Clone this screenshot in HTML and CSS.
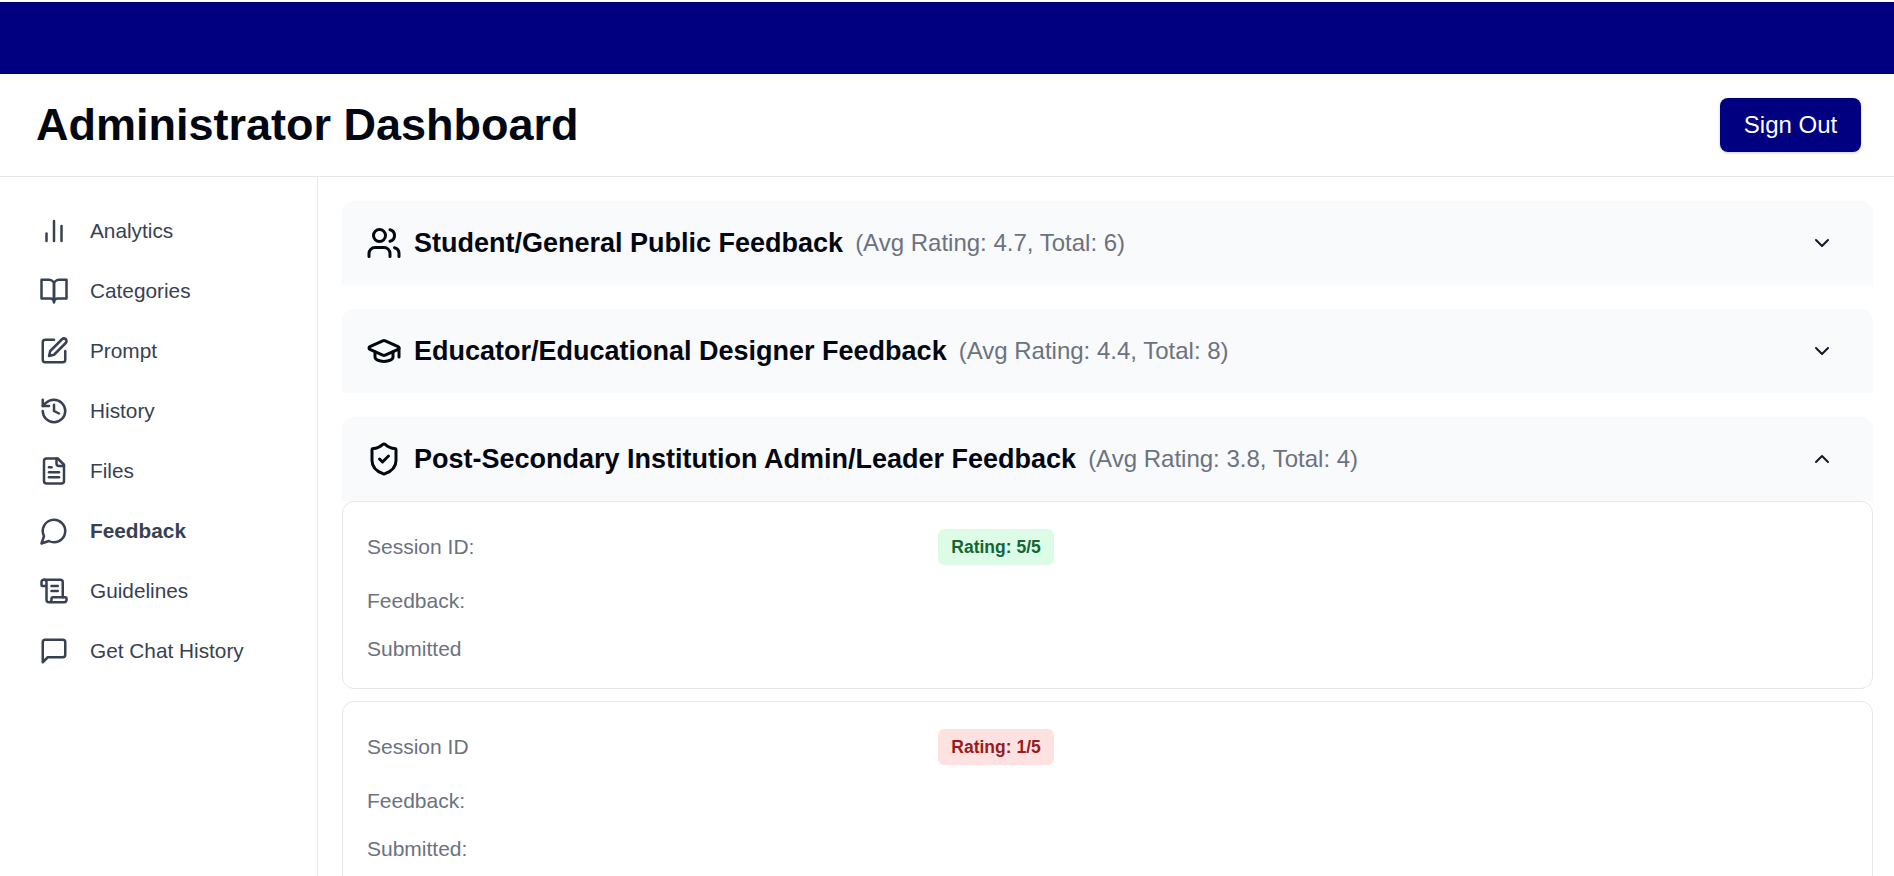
FILE: index.html
```html
<!DOCTYPE html>
<html lang="en">
<head>
    <meta charset="UTF-8">
    <meta name="viewport" content="width=device-width, initial-scale=1.0">
    <title>Administrator Dashboard</title>
    <link rel="stylesheet" href="styles.css">
</head>
<body>
    <div class="top-band"></div>
    <header class="page-header">
        <h1>Administrator Dashboard</h1>
        <button class="sign-out" type="button">Sign Out</button>
    </header>
    <div class="layout">
        <nav class="sidebar">
            <a class="nav-item" href="#">
                <svg class="nav-icon" viewBox="0 0 24 24"><path d="M12 20V4"/><path d="M18 20V8"/><path d="M6 20v-6"/></svg>
                Analytics
            </a>
            <a class="nav-item" href="#">
                <svg class="nav-icon" viewBox="0 0 24 24"><path d="M2 3h6a4 4 0 0 1 4 4v14a3 3 0 0 0-3-3H2z"/><path d="M22 3h-6a4 4 0 0 0-4 4v14a3 3 0 0 1 3-3h7z"/></svg>
                Categories
            </a>
            <a class="nav-item" href="#">
                <svg class="nav-icon" viewBox="0 0 24 24"><path d="M12 3H5a2 2 0 0 0-2 2v14a2 2 0 0 0 2 2h14a2 2 0 0 0 2-2v-7"/><path d="M18.4 2.6a2.1 2.1 0 0 1 3 3L12 15l-4 1 1-4z"/></svg>
                Prompt
            </a>
            <a class="nav-item" href="#">
                <svg class="nav-icon" viewBox="0 0 24 24"><path d="M3 12a9 9 0 1 0 9-9 9.75 9.75 0 0 0-6.74 2.74L3 8"/><path d="M3 3v5h5"/><path d="M12 7v5l4 2"/></svg>
                History
            </a>
            <a class="nav-item" href="#">
                <svg class="nav-icon" viewBox="0 0 24 24"><path d="M15 2H6a2 2 0 0 0-2 2v16a2 2 0 0 0 2 2h12a2 2 0 0 0 2-2V7z"/><path d="M14 2v4a2 2 0 0 0 2 2h4"/><path d="M16 13H8"/><path d="M16 17H8"/><path d="M10 9H8"/></svg>
                Files
            </a>
            <a class="nav-item nav-item-active" href="#">
                <svg class="nav-icon" viewBox="0 0 24 24"><path d="M7.9 20A9 9 0 1 0 4 16.1L2 22z"/></svg>
                Feedback
            </a>
            <a class="nav-item" href="#">
                <svg class="nav-icon" viewBox="0 0 24 24"><path d="M15 12h-5"/><path d="M15 8h-5"/><path d="M19 17V5a2 2 0 0 0-2-2H4"/><path d="M8 21h12a2 2 0 0 0 2-2v-1a1 1 0 0 0-1-1H11a1 1 0 0 0-1 1v1a2 2 0 1 1-4 0V5a2 2 0 1 0-4 0v2a1 1 0 0 0 1 1h3"/></svg>
                Guidelines
            </a>
            <a class="nav-item" href="#">
                <svg class="nav-icon" viewBox="0 0 24 24"><path d="M21 15a2 2 0 0 1-2 2H7l-4 4V5a2 2 0 0 1 2-2h14a2 2 0 0 1 2 2z"/></svg>
                Get Chat History
            </a>
        </nav>
        <main class="content">
            <section class="group">
                <div class="group-header">
                    <svg class="group-icon" viewBox="0 0 24 24"><path d="M16 21v-2a4 4 0 0 0-4-4H6a4 4 0 0 0-4 4v2"/><circle cx="9" cy="7" r="4"/><path d="M22 21v-2a4 4 0 0 0-3-3.87"/><path d="M16 3.13a4 4 0 0 1 0 7.75"/></svg>
                    <h2>Student/General Public Feedback</h2>
                    <span class="group-stats">(Avg Rating: 4.7, Total: 6)</span>
                    <svg class="chevron" viewBox="0 0 24 24"><path d="m6 9 6 6 6-6"/></svg>
                </div>
            </section>
            <section class="group">
                <div class="group-header">
                    <svg class="group-icon" viewBox="0 0 24 24"><path d="M21.42 10.92a1 1 0 0 0-.02-1.84L12.83 5.18a2 2 0 0 0-1.66 0L2.6 9.08a1 1 0 0 0 0 1.83l8.57 3.91a2 2 0 0 0 1.66 0z"/><path d="M22 10v6"/><path d="M6 12.5V16a6 3 0 0 0 12 0v-3.5"/></svg>
                    <h2>Educator/Educational Designer Feedback</h2>
                    <span class="group-stats">(Avg Rating: 4.4, Total: 8)</span>
                    <svg class="chevron" viewBox="0 0 24 24"><path d="m6 9 6 6 6-6"/></svg>
                </div>
            </section>
            <section class="group">
                <div class="group-header">
                    <svg class="group-icon" viewBox="0 0 24 24"><path d="M20 13c0 5-3.5 7.5-7.66 8.95a1 1 0 0 1-.67-.01C7.5 20.5 4 18 4 13V6a1 1 0 0 1 1-1c2 0 4.5-1.2 6.24-2.72a1.17 1.17 0 0 1 1.52 0C14.51 3.81 17 5 19 5a1 1 0 0 1 1 1z"/><path d="m9 12 2 2 4-4"/></svg>
                    <h2>Post-Secondary Institution Admin/Leader Feedback</h2>
                    <span class="group-stats">(Avg Rating: 3.8, Total: 4)</span>
                    <svg class="chevron" viewBox="0 0 24 24"><path d="m18 15-6-6-6 6"/></svg>
                </div>
                <div class="feedback-list">
                    <article class="feedback-card">
                        <div class="card-top">
                            <span class="field">Session ID:</span>
                            <span class="rating rating-high">Rating: 5/5</span>
                        </div>
                        <p class="field">Feedback:</p>
                        <p class="field">Submitted</p>
                    </article>
                    <article class="feedback-card">
                        <div class="card-top">
                            <span class="field">Session ID</span>
                            <span class="rating rating-low">Rating: 1/5</span>
                        </div>
                        <p class="field">Feedback:</p>
                        <p class="field">Submitted:</p>
                    </article>
                </div>
            </section>
        </main>
    </div>
</body>
</html>
```

FILE: styles.css
```css
* {
    box-sizing: border-box;
}
html, body {
    height: 100%;
}
body {
    margin: 0;
    padding-top: 2px;
    display: flex;
    flex-direction: column;
    overflow: hidden;
    background-color: #fff;
    color: #030712;
    font-family: "Liberation Sans", Arial, sans-serif;
}
.top-band {
    height: 72px;
    flex-shrink: 0;
    background-color: #000080;
}
.page-header {
    height: 103px;
    flex-shrink: 0;
    display: flex;
    justify-content: space-between;
    align-items: center;
    padding: 0 33px 0 36px;
    border-bottom: 1px solid #e5e7eb;
}
h1 {
    margin: 0;
    font-size: 45px;
    font-weight: bold;
}
.sign-out {
    width: 141px;
    height: 54px;
    border: none;
    border-radius: 8px;
    background-color: #000080;
    color: #fff;
    font-family: inherit;
    font-size: 24px;
    box-shadow: 0 1px 3px rgba(0, 0, 0, 0.2);
    cursor: pointer;
}
.layout {
    flex: 1;
    display: flex;
    min-height: 0;
}
.sidebar {
    width: 318px;
    flex-shrink: 0;
    padding: 24px 0 0 39px;
    border-right: 1px solid #e5e7eb;
}
.nav-item {
    height: 60px;
    display: flex;
    align-items: center;
    gap: 21px;
    color: #374151;
    font-size: 20.8px;
    text-decoration: none;
}
.nav-item-active {
    font-weight: bold;
}
.nav-icon {
    width: 30px;
    height: 30px;
    flex-shrink: 0;
    fill: none;
    stroke: #374151;
    stroke-width: 2;
    stroke-linecap: round;
    stroke-linejoin: round;
}
.content {
    flex: 1;
    padding: 24px 21px 0 24px;
    overflow: hidden;
}
.group {
    margin-bottom: 24px;
}
.group-header {
    height: 84px;
    display: flex;
    align-items: center;
    padding: 0 24px;
    border-radius: 12px 12px 0 0;
    background-color: #f9fafb;
}
.group-icon {
    width: 36px;
    height: 36px;
    flex-shrink: 0;
    margin-right: 12px;
    fill: none;
    stroke: #030712;
    stroke-width: 2;
    stroke-linecap: round;
    stroke-linejoin: round;
}
h2 {
    margin: 0 12px 0 0;
    font-size: 27px;
    font-weight: bold;
}
.group-stats {
    color: #6b7280;
    font-size: 24px;
}
.chevron {
    width: 24px;
    height: 24px;
    margin-left: auto;
    margin-right: 15px;
    fill: none;
    stroke: #111827;
    stroke-width: 2;
    stroke-linecap: round;
    stroke-linejoin: round;
}
.feedback-list {
    display: flex;
    flex-direction: column;
    gap: 12px;
}
.feedback-card {
    height: 188px;
    padding: 27px 24px 0;
    border: 1px solid #e5e7eb;
    border-radius: 12px;
    background-color: #fff;
}
.card-top {
    height: 36px;
    display: flex;
    align-items: center;
}
.card-top .field {
    width: 571px;
}
.field {
    margin: 0;
    color: #6b7280;
    font-size: 21px;
}
.feedback-card p.field {
    margin-top: 24px;
}
.rating {
    width: 116px;
    height: 36px;
    display: flex;
    align-items: center;
    justify-content: center;
    border-radius: 6px;
    font-size: 17.5px;
    font-weight: bold;
}
.rating-high {
    background-color: #dcfce7;
    color: #166534;
}
.rating-low {
    background-color: #fee2e2;
    color: #991b1b;
}
```
